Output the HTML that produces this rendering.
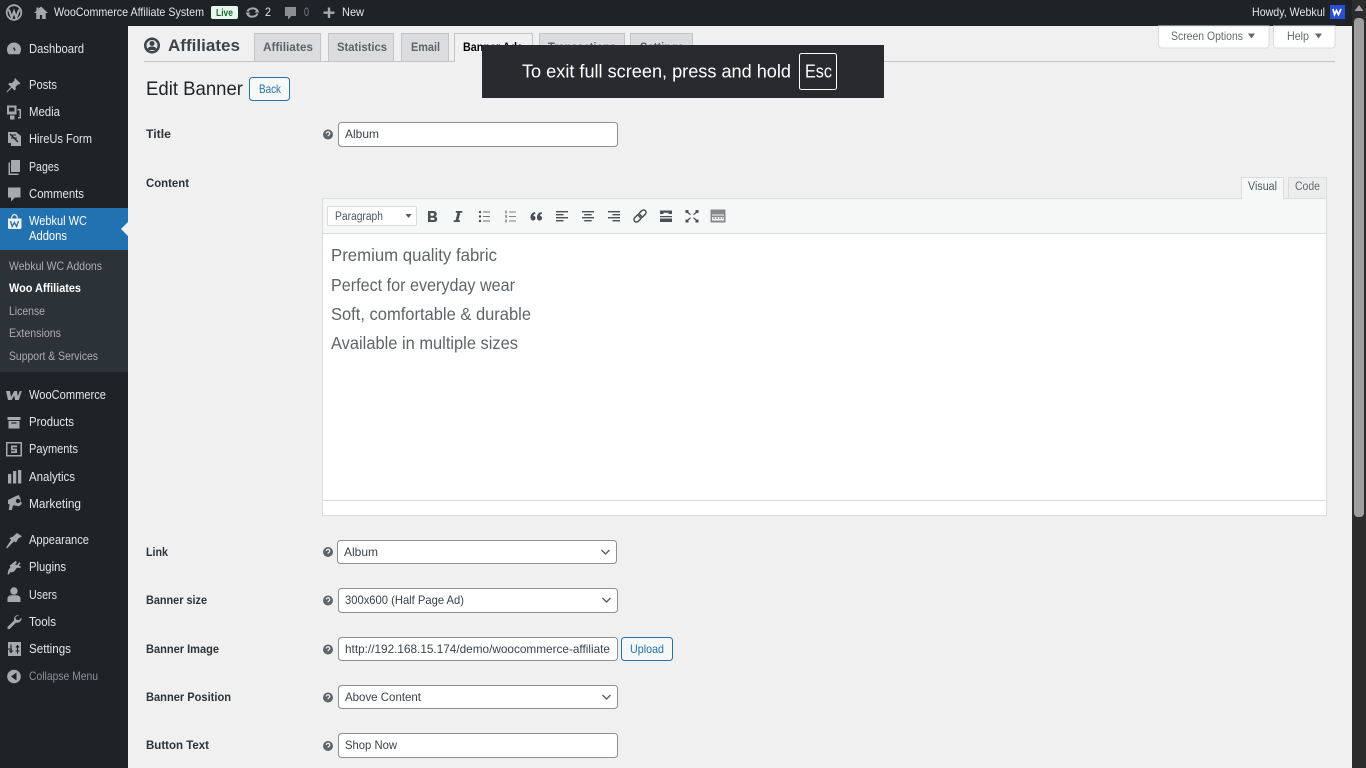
<!DOCTYPE html>
<html lang="en"><head><meta charset="utf-8"><title>Edit Banner</title>
<style>
html,body{margin:0;padding:0;background:#f0f0f1;overflow:hidden}
svg{display:block}
text{font-family:"Liberation Sans",sans-serif;font-size:12.5px;white-space:pre}
.s{fill:#e4e6e8;font-size:12.5px}
.sb{fill:#a9adb1;font-size:12px}
.i{fill:#a7aaad}
.l{fill:#2c3338;font-weight:bold;font-size:12px}
.f{fill:#3c434a;font-size:12px}
.t{fill:#5c6369;font-weight:bold;font-size:12px}
.c{fill:#5f6469;font-size:17.5px}
.b{fill:#4a5056}
.box{fill:#fff;stroke:#8c8f94;stroke-width:1}
.hp{fill:#5f6469}
</style></head><body>
<svg xmlns="http://www.w3.org/2000/svg" width="1366" height="768" viewBox="0 0 1366 768">
<rect width="1366" height="768" fill="#f0f0f1"/>

<!-- admin sidebar -->
<rect x="0" y="0" width="128" height="768" fill="#1d2327"/>
<rect x="0" y="208" width="128" height="42" fill="#2271b1"/>
<rect x="0" y="250" width="128" height="122" fill="#2c3338"/>
<path d="M128 222l-7 7 7 7z" fill="#f0f0f1"/>

<!-- admin bar -->
<rect x="0" y="0" width="1352" height="26" fill="#1d2327"/>
<circle cx="14" cy="12.500" r="7.300" fill="none" stroke="#a7aaad" stroke-width="1.800"/>
<path d="M8.800 9.500l3 8 2.200-6 2.200 6 3-8" fill="none" stroke="#a7aaad" stroke-width="2.100"/>
<path class="i" d="M41 6.500l-2.500 2.300V7.500h-2v3.200l-2.500 2.300h2.300v6h3.600v-4h2.200v4h3.600v-6h2.300z"/>
<text class="s" x="54" y="16" textLength="150" lengthAdjust="spacingAndGlyphs" style="font-size:12px">WooCommerce Affiliate System</text>
<rect x="211" y="6" width="27" height="13" rx="2" fill="#e9f6ec"/>
<text x="216" y="16" textLength="17" lengthAdjust="spacingAndGlyphs" style="font-size:10px;font-weight:bold;fill:#1e6b34">Live</text>
<path d="M247.500 11.500a5.500 4.500 0 0 1 9.500-1.500M257.500 13.500a5.500 4.500 0 0 1-9.500 1.500" fill="none" stroke="#a7aaad" stroke-width="2"/>
<path class="i" d="M254.500 12.500h5l-2-3.500zM250.500 12.500h-5l2 3.500z"/>
<text class="s" x="265" y="16" textLength="6" lengthAdjust="spacingAndGlyphs" style="font-size:12px">2</text>
<path d="M285 7h11v9h-4.500l-3.500 3.500v-3.500h-3z" fill="#8b8f94"/>
<text x="304" y="16" textLength="5" lengthAdjust="spacingAndGlyphs" style="font-size:12px;fill:#7c8186">0</text>
<path class="i" d="M327.800 7.500h2.400v4h4.300v2.400h-4.300v4.100h-2.400v-4.100h-4.300v-2.400h4.300z"/>
<text class="s" x="342" y="16" textLength="22" lengthAdjust="spacingAndGlyphs" style="font-size:12px">New</text>
<text class="s" x="1252" y="16" textLength="73" lengthAdjust="spacingAndGlyphs" style="font-size:12px">Howdy, Webkul</text>
<rect x="1330" y="5" width="15" height="14" fill="#2b4ed6"/>
<path d="M1333 9l1.500 5.500 2-4 2 4 2.500-5.500" fill="none" stroke="#fff" stroke-width="1.700"/>

<!-- sidebar icons -->
<g class="i">
<path fill-rule="evenodd" d="M14 42.500a7 7 0 0 1 7 7c0 2-.7 3.500-1.800 4.800H8.800A7 7 0 0 1 7 49.500a7 7 0 0 1 7-7zM13 48l1.500 3 1.200-.7L14.300 47.200z"/>
<path d="M15 78l5.500 5.500-1.500 1-.8-.3-2.700 2.800.3 2.300-1.300 1.200-2.700-2.800-4.300 4.300-1 .3.300-1 4.200-4.400-2.800-2.700 1.200-1.300 2.300.3 2.800-2.700-.2-.9z"/>
<path fill-rule="evenodd" d="M7 105.500h9.500v9H7zM9 107.500v4h5.500v-4z"/>
<path d="M17.500 109h3.500v9.500h-3v-1.500h1.500v-6.500h-2zM10 115.500h4.500v4h-4.500z"/>
<path d="M8 132h8l5 4v10H11v-3H8z"/>
<path d="M10 134l8 8" stroke="#1d2327" stroke-width="1.300"/>
<path d="M11 135h5M11 138h6" stroke="#1d2327" stroke-width="1"/>
<path d="M11 160h9v12H11z"/>
<path d="M8.500 162.500h1.500v11h8.500v1.500h-10z"/>
<path d="M8 187.500h12.500v10h-5.500l-4 4v-4h-3z"/>
</g>
<path fill-rule="evenodd" fill="#f0f0f1" d="M8 218.500h3c.2-2.800 1.500-4.500 3.500-4.500s3.300 1.700 3.500 4.500h3.500v9c0 1-.8 1.500-1.500 1.500H9.500c-.8 0-1.500-.5-1.500-1.500zM12.200 218.500h4.600c-.1-2-.9-3.200-2.300-3.200s-2.200 1.200-2.300 3.200z"/>
<path d="M10.500 221l1.700 5.500 2.200-4 2.200 4 1.900-5.500" fill="none" stroke="#2271b1" stroke-width="1.300"/>
<g class="i">
<path d="M6 391h4l1 6 3.300-6h2.700l.8 5.500 2-5.500h2l-3 9h-3.800l-.8-4.500-2.500 4.500H8z"/>
<path d="M7.500 417h13v3h-13zM8.500 421h11v7.500h-11z"/>
<path d="M11.500 423h5" stroke="#1d2327" stroke-width="1.200"/>
<path fill-rule="evenodd" d="M6 442h16v14.500H6zM7.500 443.500v11.500h13v-11.500z"/>
<path d="M11 445.500h6v1.700h-4.200v1.400H17v4.400h-6v-1.700h4.200v-1H11z"/>
<rect x="8" y="474" width="3.300" height="9.500"/><rect x="13" y="471" width="3.300" height="12.500"/><rect x="18" y="470" width="3.300" height="13.500"/>
<path d="M8 500l7-3.500 3.800-1.500 1.800 4v3l1 .3v2l-1 .4-1.500 1.500-6-1-1.300 4.800h-3l.8-5.800-1.600-.2z"/>
<circle cx="18" cy="501" r="2.200" fill="#1d2327"/>
<path d="M17 533l5 3.200-3.800 2.400-2.200 4-2-1.300-7 7.200-.8-1 5-7.700-2-1.600 3.800-1.700z"/>
<path d="M15.500 561l1.500 1-2 2.700h2.300l2-2.500 1.300 1-2 2.600 2.400.4-.8 1.800-3.200-.2-3 3.700-2 .8H10l-1 2.200-1.500-.3.700-3 .3-1.500 2-2.600-.8-1.500z"/>
<circle cx="14" cy="591" r="3.700"/><path d="M7.500 602v-3.500c0-2 1.800-3 3.500-3.300h6c1.700.3 3.500 1.300 3.500 3.300v3.500z"/>
<path d="M19 615a4.500 4.500 0 0 0-5 3.500c-.1.700 0 1.300.1 2L8 626.500c-.8.900-.8 1.700-.2 2.300s1.400.5 2.200-.2l6-6c.7.200 1.300.2 2 .1a4.500 4.500 0 0 0 3.500-5l-2.800 2.600-2.700-.7-.6-2.500z"/>
<rect x="8" y="642" width="13" height="14"/>
</g>
<path d="M11 644.500v8M9.500 650.500l1.500 2 1.500-2M17.500 653.500v-8M16 647.500l1.500-2 1.500 2M8 649h4M15.500 651h4" fill="none" stroke="#1d2327" stroke-width="1.100"/>
<circle cx="14" cy="676.500" r="6.800" fill="#a7aaad"/>
<path d="M16.500 672.500v8l-5.500-4z" fill="#1d2327"/>

<!-- sidebar text -->
<g>
<text class="s" x="29" y="53" textLength="55" lengthAdjust="spacingAndGlyphs">Dashboard</text>
<text class="s" x="29" y="89" textLength="28" lengthAdjust="spacingAndGlyphs">Posts</text>
<text class="s" x="29" y="116" textLength="31" lengthAdjust="spacingAndGlyphs">Media</text>
<text class="s" x="29" y="143" textLength="63" lengthAdjust="spacingAndGlyphs">HireUs Form</text>
<text class="s" x="29" y="171" textLength="30" lengthAdjust="spacingAndGlyphs">Pages</text>
<text class="s" x="29" y="198" textLength="55" lengthAdjust="spacingAndGlyphs">Comments</text>
<text x="29" y="225" textLength="58" lengthAdjust="spacingAndGlyphs" style="fill:#fff">Webkul WC</text>
<text x="29" y="240" textLength="38" lengthAdjust="spacingAndGlyphs" style="fill:#fff">Addons</text>
<text class="sb" x="9" y="270" textLength="93" lengthAdjust="spacingAndGlyphs">Webkul WC Addons</text>
<text x="9" y="292" textLength="72" lengthAdjust="spacingAndGlyphs" style="fill:#fff;font-weight:bold;font-size:12px">Woo Affiliates</text>
<text class="sb" x="9" y="315" textLength="36" lengthAdjust="spacingAndGlyphs">License</text>
<text class="sb" x="9" y="337" textLength="52" lengthAdjust="spacingAndGlyphs">Extensions</text>
<text class="sb" x="9" y="360" textLength="89" lengthAdjust="spacingAndGlyphs">Support &amp; Services</text>
<text class="s" x="29" y="399" textLength="77" lengthAdjust="spacingAndGlyphs">WooCommerce</text>
<text class="s" x="29" y="426" textLength="45" lengthAdjust="spacingAndGlyphs">Products</text>
<text class="s" x="29" y="453" textLength="49" lengthAdjust="spacingAndGlyphs">Payments</text>
<text class="s" x="29" y="481" textLength="46" lengthAdjust="spacingAndGlyphs">Analytics</text>
<text class="s" x="29" y="508" textLength="52" lengthAdjust="spacingAndGlyphs">Marketing</text>
<text class="s" x="29" y="544" textLength="60" lengthAdjust="spacingAndGlyphs">Appearance</text>
<text class="s" x="29" y="571" textLength="37" lengthAdjust="spacingAndGlyphs">Plugins</text>
<text class="s" x="29" y="599" textLength="28" lengthAdjust="spacingAndGlyphs">Users</text>
<text class="s" x="29" y="626" textLength="27" lengthAdjust="spacingAndGlyphs">Tools</text>
<text class="s" x="29" y="653" textLength="42" lengthAdjust="spacingAndGlyphs">Settings</text>
<text x="29" y="680" textLength="69" lengthAdjust="spacingAndGlyphs" style="fill:#8c9196;font-size:12px">Collapse Menu</text>
</g>


<path d="M144 61.500H1335" stroke="#c3c4c7"/>

<!-- screen meta -->
<path d="M1158.500 26v19a3 3 0 0 0 3 3h104.500a3 3 0 0 0 3-3v-19z" fill="#fff" stroke="#dcdcde"/>
<text x="1171" y="40" textLength="72" lengthAdjust="spacingAndGlyphs" style="fill:#646970;font-size:12px">Screen Options</text>
<path d="M1248 33.500h7l-3.500 5z" fill="#646970"/>
<path d="M1273.500 26v19a3 3 0 0 0 3 3h55.500a3 3 0 0 0 3-3v-19z" fill="#fff" stroke="#dcdcde"/>
<text x="1287" y="40" textLength="22" lengthAdjust="spacingAndGlyphs" style="fill:#646970;font-size:12px">Help</text>
<path d="M1315 33.500h7l-3.500 5z" fill="#646970"/>

<!-- scrollbar -->
<rect x="1352" y="0" width="14" height="768" fill="#2c2c2c"/>
<path d="M1359 5l4.500 6h-9z" fill="#a3a3a3"/>
<rect x="1354" y="18" width="10" height="499" rx="4" fill="#9e9e9e"/>

<!-- plugin header / tabs -->
<circle cx="152" cy="45.500" r="8" fill="#3c434a"/>
<circle cx="152" cy="45.500" r="5.500" fill="#e6e6e6"/>
<circle cx="152" cy="43.500" r="2.500" fill="#3c434a"/>
<path d="M147 50c1-3 2.500-3.500 5-3.500s4 .5 5 3.500z" fill="#3c434a"/>
<text x="168" y="51" textLength="72" lengthAdjust="spacingAndGlyphs" style="fill:#3c434a;font-weight:bold;font-size:16.500px">Affiliates</text>
<g fill="#dcdcde" stroke="#c3c4c7">
<rect x="254.500" y="33.500" width="66" height="28"/>
<rect x="328.500" y="33.500" width="65" height="28"/>
<rect x="401.500" y="33.500" width="47" height="28"/>
<rect x="539.500" y="33.500" width="85" height="28"/>
<rect x="630.500" y="33.500" width="62" height="28"/>
</g>
<path d="M454.500 62v-28.500h78V62" fill="#f0f0f1" stroke="#c3c4c7"/>
<text class="t" x="263" y="51" textLength="50" lengthAdjust="spacingAndGlyphs">Affiliates</text>
<text class="t" x="337" y="51" textLength="50" lengthAdjust="spacingAndGlyphs">Statistics</text>
<text class="t" x="411" y="51" textLength="29" lengthAdjust="spacingAndGlyphs">Email</text>
<text class="t" x="463" y="51" textLength="60" lengthAdjust="spacingAndGlyphs" style="fill:#000">Banner Ads</text>
<text class="t" x="548" y="51" textLength="68" lengthAdjust="spacingAndGlyphs">Transactions</text>
<text class="t" x="640" y="51" textLength="44" lengthAdjust="spacingAndGlyphs">Settings</text>

<!-- heading -->
<text x="146" y="95" textLength="97" lengthAdjust="spacingAndGlyphs" style="fill:#1d2327;font-size:19.500px">Edit Banner</text>
<rect x="249.500" y="77.500" width="40" height="23" rx="3" fill="#f6f7f7" stroke="#2271b1"/>
<text x="259" y="93" textLength="22" lengthAdjust="spacingAndGlyphs" style="fill:#2271b1;font-size:12px">Back</text>

<!-- labels -->
<text class="l" x="146" y="138" textLength="25" lengthAdjust="spacingAndGlyphs">Title</text>
<text class="l" x="146" y="187" textLength="43" lengthAdjust="spacingAndGlyphs">Content</text>
<text class="l" x="146" y="556" textLength="22" lengthAdjust="spacingAndGlyphs">Link</text>
<text class="l" x="146" y="604" textLength="61" lengthAdjust="spacingAndGlyphs">Banner size</text>
<text class="l" x="146" y="653" textLength="73" lengthAdjust="spacingAndGlyphs">Banner Image</text>
<text class="l" x="146" y="701" textLength="85" lengthAdjust="spacingAndGlyphs">Banner Position</text>
<text class="l" x="146" y="749" textLength="63" lengthAdjust="spacingAndGlyphs">Button Text</text>

<!-- help icons -->
<g>
<circle class="hp" cx="328" cy="134.500" r="5"/><circle class="hp" cx="328" cy="552" r="5"/><circle class="hp" cx="328" cy="600.500" r="5"/><circle class="hp" cx="328" cy="649.500" r="5"/><circle class="hp" cx="328" cy="697.500" r="5"/><circle class="hp" cx="328" cy="746" r="5"/>
</g>
<g fill="none" stroke="#f0f0f1" stroke-width="1.200">
<path d="M326.300 133.500a1.700 1.700 0 1 1 2.500 1.500c-.6.300-.8.700-.8 1.200"/>
<path d="M326.300 551a1.700 1.700 0 1 1 2.500 1.500c-.6.300-.8.700-.8 1.200"/>
<path d="M326.300 599.500a1.700 1.700 0 1 1 2.500 1.500c-.6.300-.8.700-.8 1.200"/>
<path d="M326.300 648.500a1.700 1.700 0 1 1 2.500 1.500c-.6.300-.8.700-.8 1.200"/>
<path d="M326.300 696.500a1.700 1.700 0 1 1 2.500 1.500c-.6.300-.8.700-.8 1.200"/>
<path d="M326.300 745a1.700 1.700 0 1 1 2.500 1.500c-.6.300-.8.700-.8 1.200"/>
</g>

<!-- form fields -->
<rect class="box" x="338.500" y="122.500" width="279" height="24" rx="3"/>
<text class="f" x="345" y="138" textLength="34" lengthAdjust="spacingAndGlyphs">Album</text>
<rect class="box" x="337.500" y="540.500" width="279" height="23" rx="3"/>
<text class="f" x="344" y="556" textLength="34" lengthAdjust="spacingAndGlyphs">Album</text>
<path d="M601.500 550l4 4 4-4" fill="none" stroke="#50575e" stroke-width="1.300"/>
<rect class="box" x="338.500" y="588.500" width="279" height="24" rx="3"/>
<text class="f" x="345" y="604" textLength="119" lengthAdjust="spacingAndGlyphs">300x600 (Half Page Ad)</text>
<path d="M602.500 598l4 4 4-4" fill="none" stroke="#50575e" stroke-width="1.300"/>
<rect class="box" x="338.500" y="637.500" width="279" height="23" rx="3"/>
<text class="f" x="345" y="653" textLength="265" lengthAdjust="spacingAndGlyphs">http://192.168.15.174/demo/woocommerce-affiliate</text>
<rect x="621.500" y="637.500" width="51" height="23" rx="3" fill="#f6f7f7" stroke="#2271b1"/>
<text x="630" y="653" textLength="34" lengthAdjust="spacingAndGlyphs" style="fill:#2271b1;font-size:12px">Upload</text>
<rect class="box" x="338.500" y="685.500" width="279" height="23" rx="3"/>
<text class="f" x="345" y="701" textLength="76" lengthAdjust="spacingAndGlyphs">Above Content</text>
<path d="M602.500 695l4 4 4-4" fill="none" stroke="#50575e" stroke-width="1.300"/>
<rect class="box" x="338.500" y="733.500" width="279" height="24" rx="3"/>
<text class="f" x="345" y="749" textLength="52" lengthAdjust="spacingAndGlyphs">Shop Now</text>

<!-- editor -->
<rect x="1288.500" y="177.500" width="38" height="22" fill="#ececed" stroke="#dcdcde"/>
<text x="1295" y="190" textLength="25" lengthAdjust="spacingAndGlyphs" style="fill:#646970;font-size:11.500px">Code</text>
<rect x="322.500" y="198.500" width="1004" height="317" fill="#fff" stroke="#dcdcde"/>
<rect x="323" y="199" width="1003" height="34" fill="#f6f7f7"/>
<path d="M323 233.500H1326" stroke="#dcdcde"/>
<path d="M323 500.500H1326" stroke="#dcdcde"/>
<path d="M1241.500 199.500v-22h42v22" fill="#f6f7f7" stroke="#dcdcde"/>
<rect x="1242" y="196" width="41" height="5" fill="#f6f7f7"/>
<text x="1248" y="190" textLength="29" lengthAdjust="spacingAndGlyphs" style="fill:#50575e;font-size:11.500px">Visual</text>
<rect x="327.500" y="206.500" width="89" height="19" fill="#fff" stroke="#dcdcde"/>
<text x="335" y="220" textLength="48" lengthAdjust="spacingAndGlyphs" style="fill:#50575e;font-size:11.500px">Paragraph</text>
<path d="M405.500 214h6l-3 4z" fill="#50575e"/>

<!-- toolbar icons -->
<g class="b">
<path fill-rule="evenodd" d="M428 211h5c2.500 0 3.700 1.200 3.700 3 0 1.200-.6 2-1.500 2.400 1.200.3 2 1.300 2 2.700 0 2-1.500 2.900-3.700 2.900H428zM430.500 213v2.700h2.200c.9 0 1.400-.5 1.400-1.350s-.5-1.350-1.400-1.350zM430.500 217.700v2.300h2.500c1 0 1.500-.5 1.500-1.150s-.5-1.150-1.500-1.150z"/>
<path d="M456 211h6.500l-.4 1.800h-1.800l-1.900 7.400h1.700l-.4 1.800h-6.200l.4-1.800h1.700l1.900-7.400H455.600z"/>
<circle cx="480" cy="212" r="1.200"/><circle cx="480" cy="216.500" r="1.200"/><circle cx="480" cy="221" r="1.200"/>
<rect x="483" y="211.500" width="7" height="1" opacity=".8"/><rect x="483" y="216" width="7" height="1" opacity=".8"/><rect x="483" y="220.500" width="7" height="1" opacity=".8"/>
<rect x="509" y="211.500" width="7" height="1" opacity=".7"/><rect x="509" y="216" width="7" height="1" opacity=".7"/><rect x="509" y="220.500" width="7" height="1" opacity=".7"/>
<rect x="505" y="210.500" width="2" height="3" opacity=".5"/><rect x="505" y="215" width="2" height="3" opacity=".5"/><rect x="505" y="219.500" width="2" height="3" opacity=".5"/>
<path d="M535 212c-2.800.6-4.500 2.400-4.500 5.200 0 2 1 3.300 2.600 3.300 1.300 0 2.400-1 2.400-2.400s-1-2.300-2.200-2.300c.2-1 1-1.700 2.200-2.200zM541.500 212c-2.800.6-4.500 2.400-4.500 5.200 0 2 1 3.300 2.600 3.300 1.300 0 2.400-1 2.400-2.400s-1-2.300-2.200-2.300c.2-1 1-1.700 2.200-2.200z"/>
<rect x="556" y="211" width="12" height="1.400"/><rect x="556" y="214" width="7.500" height="1.400"/><rect x="556" y="217" width="12" height="1.400"/><rect x="556" y="220" width="7.500" height="1.400"/>
<rect x="582" y="211" width="12" height="1.400"/><rect x="584.200" y="214" width="7.500" height="1.400"/><rect x="582" y="217" width="12" height="1.400"/><rect x="584.200" y="220" width="7.500" height="1.400"/>
<rect x="608" y="211" width="12" height="1.400"/><rect x="612.500" y="214" width="7.500" height="1.400"/><rect x="608" y="217" width="12" height="1.400"/><rect x="612.500" y="220" width="7.500" height="1.400"/>
<path d="M660 210.500h12v3.500h-3.500v-1.300h-5v1.300H660zM660 216h12v1.200h-12zM660 218.500h12v3.500h-12z" />
<rect x="685.500" y="210" width="3" height="3"/><rect x="695.500" y="210" width="3" height="3"/><rect x="685.500" y="219.500" width="3" height="3"/><rect x="695.500" y="219.500" width="3" height="3"/>
<path d="M687.500 212l3 2.800M696.500 212l-3 2.800M687.500 220.500l3-2.800M696.500 220.500l-3-2.800" stroke="#4a5056" stroke-width="1.200" fill="none"/>
</g>
<g fill="#85898e">
<path fill-rule="evenodd" d="M710.500 209.500h15v13h-15zM712 214.500v1h12v-1zM712 217v3.500h12V217z"/>
<path d="M713 217.500h2v1.200h-2zM716 217.500h2v1.200h-2zM719 217.500h2v1.200h-2zM722 217.500h1.500v1.200H722z"/>
</g>
<g fill="none" stroke="#4a5056" stroke-width="1.500" transform="rotate(-45 640 216)">
<rect x="632.500" y="213.500" width="8.500" height="5" rx="2.500"/>
<rect x="639" y="213.500" width="8.500" height="5" rx="2.500"/>
</g>

<!-- editor content -->
<text class="c" x="331" y="261" textLength="166" lengthAdjust="spacingAndGlyphs">Premium quality fabric</text>
<text class="c" x="331" y="291" textLength="184" lengthAdjust="spacingAndGlyphs">Perfect for everyday wear</text>
<text class="c" x="331" y="320" textLength="200" lengthAdjust="spacingAndGlyphs">Soft, comfortable &amp; durable</text>
<text class="c" x="331" y="349" textLength="187" lengthAdjust="spacingAndGlyphs">Available in multiple sizes</text>

<!-- fullscreen toast -->
<rect x="482" y="45" width="402" height="53" fill="#292a2d"/>
<text x="522" y="77.500" textLength="269" lengthAdjust="spacingAndGlyphs" style="fill:#fff;font-size:18px">To exit full screen, press and hold</text>
<rect x="799.500" y="53.500" width="37" height="36" rx="2" fill="none" stroke="#fff"/>
<text x="805" y="77.500" textLength="27" lengthAdjust="spacingAndGlyphs" style="fill:#fff;font-size:18px">Esc</text>
</svg>
</body></html>
